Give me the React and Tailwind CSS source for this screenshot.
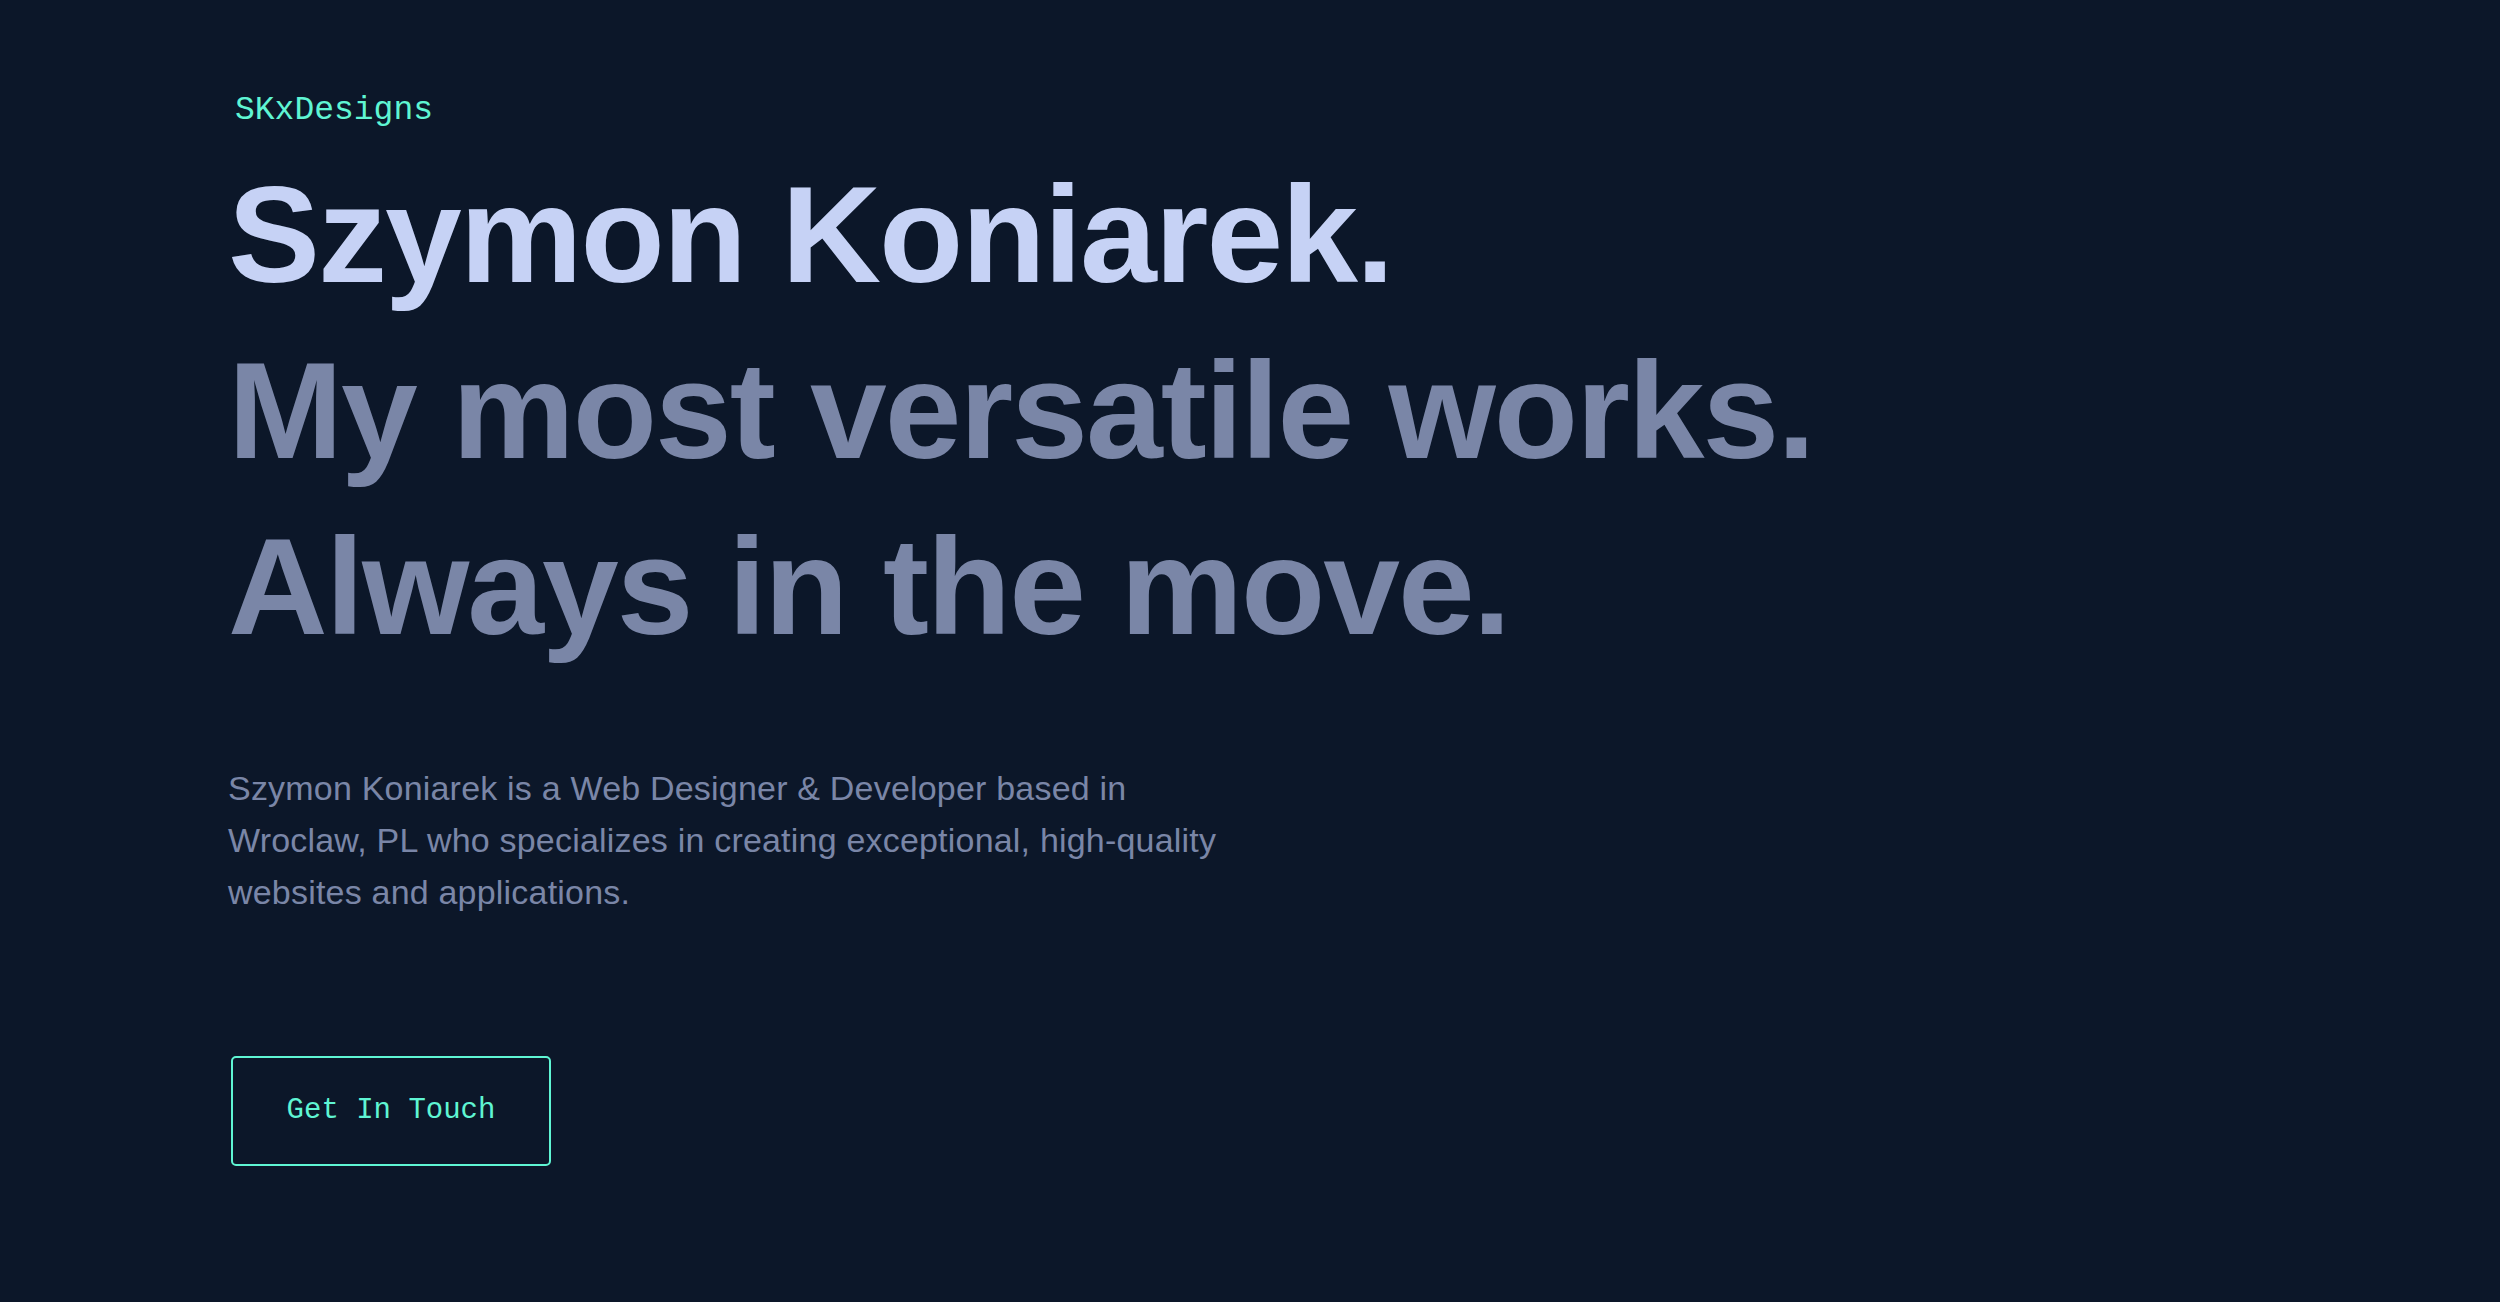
export default function App() {
  return (
    <main className="min-h-screen w-full bg-[#0c1729] pl-[228px] pt-[91px] pb-[120px]">
      <p className="ml-[7px] font-['Liberation_Mono',monospace] text-[33px] leading-[40px] text-[#5ff5d3]">
        SKxDesigns
      </p>

      <h1 className="mt-[15px] font-['Liberation_Sans',Arial,sans-serif] text-[138px] font-bold leading-[176px] tracking-[-2px]">
        <span className="block text-[#c6d2f5]">Szymon Koniarek.</span>
        <span className="block text-[#7a86a7]">My most versatile works.</span>
        <span className="block text-[#7a86a7]">Always in the move.</span>
      </h1>

      <p className="mt-[88px] max-w-[1030px] font-['Liberation_Sans',Arial,sans-serif] text-[34px] leading-[52px] tracking-[0.2px] text-[#7a86a7]">
        Szymon Koniarek is a Web Designer &amp; Developer based in Wroclaw, PL who
        specializes in creating exceptional, high-quality websites and applications.
      </p>

      <button className="mt-[138px] ml-[3px] flex h-[110px] w-[320px] items-center justify-center rounded-[5px] border-2 border-[#5ff5d3] font-['Liberation_Mono',monospace] text-[29px] text-[#5ff5d3]">
        Get In Touch
      </button>
    </main>
  );
}
